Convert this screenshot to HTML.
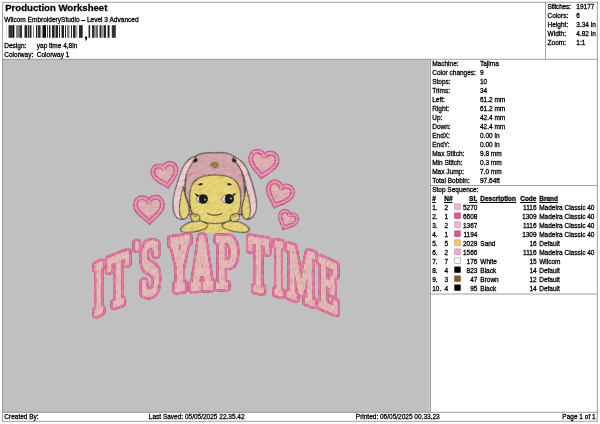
<!DOCTYPE html>
<html><head><meta charset="utf-8"><title>Production Worksheet</title>
<style>
html,body{margin:0;padding:0;background:#fff;}
body{width:600px;height:424px;position:relative;overflow:hidden;font-family:"Liberation Sans",sans-serif;color:#000;}
.t{position:absolute;white-space:nowrap;-webkit-text-stroke:0.28px #000;}
.t{text-decoration-skip-ink:none;}
svg{position:absolute;left:0;top:0;}
#txt{position:absolute;left:0;top:0;width:600px;height:424px;will-change:transform;}
</style></head><body>
<svg width="600" height="424" viewBox="0 0 600 424">
<rect x="2.6" y="59.4" width="427.2" height="352.9" fill="#c0c0c0"/>
<line x1="2.2" y1="2.3" x2="597.7" y2="2.3" stroke="#757575" stroke-width="0.7"/>
<line x1="2.2" y1="421.3" x2="597.7" y2="421.3" stroke="#757575" stroke-width="0.7"/>
<line x1="2.6" y1="2.3" x2="2.6" y2="421.3" stroke="#757575" stroke-width="0.7"/>
<line x1="597.3" y1="2.3" x2="597.3" y2="421.3" stroke="#757575" stroke-width="0.7"/>
<line x1="2.6" y1="59.3" x2="597.3" y2="59.3" stroke="#757575" stroke-width="0.7"/>
<line x1="2.6" y1="412.3" x2="597.3" y2="412.3" stroke="#757575" stroke-width="0.7"/>
<line x1="545.5" y1="2.3" x2="545.5" y2="59.3" stroke="#757575" stroke-width="0.7"/>
<line x1="430.5" y1="59.3" x2="430.5" y2="412.3" stroke="#757575" stroke-width="0.7"/>
<line x1="430.5" y1="185.5" x2="597.3" y2="185.5" stroke="#757575" stroke-width="0.7"/>
<line x1="430.5" y1="294.0" x2="597.3" y2="294.0" stroke="#757575" stroke-width="0.7"/>
</svg>
<div id="txt">
<div class="t" style="top:2.22px;font-size:9.6px;line-height:12px;left:5.2px;font-weight:bold;">Production Worksheet</div>
<div class="t" style="top:15.43px;font-size:6.55px;line-height:9px;left:4.3px;">Wilcom EmbroideryStudio – Level 3 Advanced</div>
<div class="t" style="top:41.75px;font-size:6.5px;line-height:8px;left:4.3px;">Design:</div>
<div class="t" style="top:41.75px;font-size:6.5px;line-height:8px;left:36.8px;">yap time 4,8in</div>
<div class="t" style="top:50.75px;font-size:6.5px;line-height:8px;left:4.3px;">Colorway:</div>
<div class="t" style="top:50.75px;font-size:6.5px;line-height:8px;left:36.8px;">Colorway 1</div>
<svg width="600" height="424" viewBox="0 0 600 424">
<rect x="6.2" y="25.2" width="0.8" height="12.6" fill="#000" fill-opacity="0.15"/>
<rect x="8.5" y="25.2" width="4" height="12.6" fill="#000" fill-opacity="0.8"/>
<rect x="12.5" y="25.2" width="1.8" height="12.6" fill="#000" fill-opacity="1"/>
<rect x="16" y="25.2" width="3.5" height="12.6" fill="#000" fill-opacity="0.5"/>
<rect x="19.5" y="25.2" width="2.5" height="12.6" fill="#000" fill-opacity="0.8"/>
<rect x="24.5" y="25.2" width="2.5" height="12.6" fill="#000" fill-opacity="0.85"/>
<rect x="27" y="25.2" width="1" height="12.6" fill="#000" fill-opacity="0.25"/>
<rect x="28" y="25.2" width="1.2" height="12.6" fill="#000" fill-opacity="0.85"/>
<rect x="29.7" y="25.2" width="1.8" height="12.6" fill="#000" fill-opacity="0.85"/>
<rect x="33" y="25.2" width="0.8" height="12.6" fill="#000" fill-opacity="0.6"/>
<rect x="36" y="25.2" width="1.1" height="12.6" fill="#000" fill-opacity="0.9"/>
<rect x="37" y="25.2" width="1" height="12.6" fill="#000" fill-opacity="0.2"/>
<rect x="38" y="25.2" width="2.5" height="12.6" fill="#000" fill-opacity="0.8"/>
<rect x="40.5" y="25.2" width="1.5" height="12.6" fill="#000" fill-opacity="0.15"/>
<rect x="42.5" y="25.2" width="3.5" height="12.6" fill="#000" fill-opacity="0.95"/>
<rect x="47" y="25.2" width="0.9" height="12.6" fill="#000" fill-opacity="0.8"/>
<rect x="49" y="25.2" width="1.5" height="12.6" fill="#000" fill-opacity="0.85"/>
<rect x="52" y="25.2" width="2.5" height="12.6" fill="#000" fill-opacity="0.85"/>
<rect x="54.5" y="25.2" width="1.5" height="12.6" fill="#000" fill-opacity="0.45"/>
<rect x="56" y="25.2" width="2" height="12.6" fill="#000" fill-opacity="0.85"/>
<rect x="59" y="25.2" width="1" height="12.6" fill="#000" fill-opacity="0.85"/>
<rect x="61.5" y="25.2" width="2.5" height="12.6" fill="#000" fill-opacity="0.85"/>
<rect x="65" y="25.2" width="1" height="12.6" fill="#000" fill-opacity="0.85"/>
<rect x="67" y="25.2" width="2.5" height="12.6" fill="#000" fill-opacity="0.5"/>
<rect x="71" y="25.2" width="1" height="12.6" fill="#000" fill-opacity="0.85"/>
<rect x="73" y="25.2" width="2.5" height="12.6" fill="#000" fill-opacity="0.85"/>
<rect x="75.5" y="25.2" width="2" height="12.6" fill="#000" fill-opacity="0.35"/>
<rect x="79" y="25.2" width="3.7" height="12.6" fill="#000" fill-opacity="0.85"/>
<rect x="88.6" y="25.2" width="1.5" height="12.6" fill="#000" fill-opacity="0.9"/>
<rect x="92.1" y="25.2" width="2.2" height="12.6" fill="#000" fill-opacity="0.85"/>
<rect x="94.3" y="25.2" width="1" height="12.6" fill="#000" fill-opacity="0.4"/>
<rect x="95.5" y="25.2" width="2.5" height="12.6" fill="#000" fill-opacity="0.6"/>
<rect x="99.5" y="25.2" width="1.8" height="12.6" fill="#000" fill-opacity="0.85"/>
<rect x="101.3" y="25.2" width="2.3" height="12.6" fill="#000" fill-opacity="0.4"/>
<rect x="103.8" y="25.2" width="2.2" height="12.6" fill="#000" fill-opacity="0.85"/>
<rect x="107.6" y="25.2" width="1.9" height="12.6" fill="#000" fill-opacity="0.9"/>
<rect x="111.8" y="25.2" width="4" height="12.6" fill="#000" fill-opacity="0.8"/>
<path d="M85 36.6h2.1v2.2q0 1.3-1.6 1.9l-.4-.7q.8-.4.8-1.2H85z" fill="#000"/>
</svg>
<div class="t" style="top:2.75px;font-size:6.5px;line-height:8px;left:547.6px;letter-spacing:-0.22px;">Stitches:</div>
<div class="t" style="top:2.75px;font-size:6.5px;line-height:8px;left:576.3px;">19177</div>
<div class="t" style="top:11.75px;font-size:6.5px;line-height:8px;left:547.6px;">Colors:</div>
<div class="t" style="top:11.75px;font-size:6.5px;line-height:8px;left:576.3px;">6</div>
<div class="t" style="top:20.75px;font-size:6.5px;line-height:8px;left:547.6px;">Height:</div>
<div class="t" style="top:20.75px;font-size:6.5px;line-height:8px;left:576.3px;">3.34 in</div>
<div class="t" style="top:29.75px;font-size:6.5px;line-height:8px;left:547.6px;">Width:</div>
<div class="t" style="top:29.75px;font-size:6.5px;line-height:8px;left:576.3px;">4.82 in</div>
<div class="t" style="top:38.75px;font-size:6.5px;line-height:8px;left:547.6px;">Zoom:</div>
<div class="t" style="top:38.75px;font-size:6.5px;line-height:8px;left:576.3px;">1:1</div>
<div class="t" style="top:59.75px;font-size:6.5px;line-height:8px;left:432.2px;">Machine:</div>
<div class="t" style="top:59.75px;font-size:6.5px;line-height:8px;left:480px;">Tajima</div>
<div class="t" style="top:68.75px;font-size:6.5px;line-height:8px;left:432.2px;">Color changes:</div>
<div class="t" style="top:68.75px;font-size:6.5px;line-height:8px;left:480px;">9</div>
<div class="t" style="top:77.75px;font-size:6.5px;line-height:8px;left:432.2px;">Stops:</div>
<div class="t" style="top:77.75px;font-size:6.5px;line-height:8px;left:480px;">10</div>
<div class="t" style="top:86.75px;font-size:6.5px;line-height:8px;left:432.2px;">Trims:</div>
<div class="t" style="top:86.75px;font-size:6.5px;line-height:8px;left:480px;">34</div>
<div class="t" style="top:95.75px;font-size:6.5px;line-height:8px;left:432.2px;">Left:</div>
<div class="t" style="top:95.75px;font-size:6.5px;line-height:8px;left:480px;">61.2 mm</div>
<div class="t" style="top:104.75px;font-size:6.5px;line-height:8px;left:432.2px;">Right:</div>
<div class="t" style="top:104.75px;font-size:6.5px;line-height:8px;left:480px;">61.2 mm</div>
<div class="t" style="top:113.75px;font-size:6.5px;line-height:8px;left:432.2px;">Up:</div>
<div class="t" style="top:113.75px;font-size:6.5px;line-height:8px;left:480px;">42.4 mm</div>
<div class="t" style="top:122.75px;font-size:6.5px;line-height:8px;left:432.2px;">Down:</div>
<div class="t" style="top:122.75px;font-size:6.5px;line-height:8px;left:480px;">42.4 mm</div>
<div class="t" style="top:131.75px;font-size:6.5px;line-height:8px;left:432.2px;">EndX:</div>
<div class="t" style="top:131.75px;font-size:6.5px;line-height:8px;left:480px;">0.00 in</div>
<div class="t" style="top:140.75px;font-size:6.5px;line-height:8px;left:432.2px;">EndY:</div>
<div class="t" style="top:140.75px;font-size:6.5px;line-height:8px;left:480px;">0.00 in</div>
<div class="t" style="top:149.75px;font-size:6.5px;line-height:8px;left:432.2px;">Max Stitch:</div>
<div class="t" style="top:149.75px;font-size:6.5px;line-height:8px;left:480px;">9.8 mm</div>
<div class="t" style="top:158.75px;font-size:6.5px;line-height:8px;left:432.2px;">Min Stitch:</div>
<div class="t" style="top:158.75px;font-size:6.5px;line-height:8px;left:480px;">0.3 mm</div>
<div class="t" style="top:167.75px;font-size:6.5px;line-height:8px;left:432.2px;">Max Jump:</div>
<div class="t" style="top:167.75px;font-size:6.5px;line-height:8px;left:480px;">7.0 mm</div>
<div class="t" style="top:176.75px;font-size:6.5px;line-height:8px;left:432.2px;">Total Bobbin:</div>
<div class="t" style="top:176.75px;font-size:6.5px;line-height:8px;left:480px;">97.64ft</div>
<div class="t" style="top:185.75px;font-size:6.5px;line-height:8px;left:432.2px;">Stop Sequence:</div>
<div class="t" style="top:194.75px;font-size:6.5px;line-height:8px;left:432.2px;font-weight:bold;text-decoration:underline;">#</div>
<div class="t" style="top:194.75px;font-size:6.5px;line-height:8px;left:444.2px;font-weight:bold;text-decoration:underline;">N#</div>
<div class="t" style="top:194.75px;font-size:6.5px;line-height:8px;right:122.60000000000002px;font-weight:bold;text-decoration:underline;">St.</div>
<div class="t" style="top:194.75px;font-size:6.5px;line-height:8px;left:480.3px;font-weight:bold;text-decoration:underline;">Description</div>
<div class="t" style="top:194.75px;font-size:6.5px;line-height:8px;left:520.2px;font-weight:bold;text-decoration:underline;">Code</div>
<div class="t" style="top:194.75px;font-size:6.5px;line-height:8px;left:539.2px;font-weight:bold;text-decoration:underline;">Brand</div>
<div class="t" style="top:203.75px;font-size:6.5px;line-height:8px;left:432.2px;">1.</div>
<div class="t" style="top:203.75px;font-size:6.5px;line-height:8px;left:444.4px;">2</div>
<svg width="600" height="424" viewBox="0 0 600 424"><rect x="454.7" y="203.9" width="5.6" height="5.6" fill="#f2b3cc" stroke="#c1869f" stroke-width="0.6"/></svg>
<div class="t" style="top:203.75px;font-size:6.5px;line-height:8px;right:122.60000000000002px;">5270</div>
<div class="t" style="top:203.75px;font-size:6.5px;line-height:8px;right:63.39999999999998px;">1116</div>
<div class="t" style="top:203.75px;font-size:6.5px;line-height:8px;left:539.2px;">Madeira Classic 40</div>
<div class="t" style="top:212.75px;font-size:6.5px;line-height:8px;left:432.2px;">2.</div>
<div class="t" style="top:212.75px;font-size:6.5px;line-height:8px;left:444.4px;">1</div>
<svg width="600" height="424" viewBox="0 0 600 424"><rect x="454.7" y="212.9" width="5.6" height="5.6" fill="#e0569b" stroke="#b34078" stroke-width="0.6"/></svg>
<div class="t" style="top:212.75px;font-size:6.5px;line-height:8px;right:122.60000000000002px;">6608</div>
<div class="t" style="top:212.75px;font-size:6.5px;line-height:8px;right:63.39999999999998px;">1309</div>
<div class="t" style="top:212.75px;font-size:6.5px;line-height:8px;left:539.2px;">Madeira Classic 40</div>
<div class="t" style="top:221.75px;font-size:6.5px;line-height:8px;left:432.2px;">3.</div>
<div class="t" style="top:221.75px;font-size:6.5px;line-height:8px;left:444.4px;">2</div>
<svg width="600" height="424" viewBox="0 0 600 424"><rect x="454.7" y="221.9" width="5.6" height="5.6" fill="#f2b7cd" stroke="#c1899f" stroke-width="0.6"/></svg>
<div class="t" style="top:221.75px;font-size:6.5px;line-height:8px;right:122.60000000000002px;">1367</div>
<div class="t" style="top:221.75px;font-size:6.5px;line-height:8px;right:63.39999999999998px;">1116</div>
<div class="t" style="top:221.75px;font-size:6.5px;line-height:8px;left:539.2px;">Madeira Classic 40</div>
<div class="t" style="top:230.75px;font-size:6.5px;line-height:8px;left:432.2px;">4.</div>
<div class="t" style="top:230.75px;font-size:6.5px;line-height:8px;left:444.4px;">1</div>
<svg width="600" height="424" viewBox="0 0 600 424"><rect x="454.7" y="230.9" width="5.6" height="5.6" fill="#e0519a" stroke="#b33c78" stroke-width="0.6"/></svg>
<div class="t" style="top:230.75px;font-size:6.5px;line-height:8px;right:122.60000000000002px;">1194</div>
<div class="t" style="top:230.75px;font-size:6.5px;line-height:8px;right:63.39999999999998px;">1309</div>
<div class="t" style="top:230.75px;font-size:6.5px;line-height:8px;left:539.2px;">Madeira Classic 40</div>
<div class="t" style="top:239.75px;font-size:6.5px;line-height:8px;left:432.2px;">5.</div>
<div class="t" style="top:239.75px;font-size:6.5px;line-height:8px;left:444.4px;">5</div>
<svg width="600" height="424" viewBox="0 0 600 424"><rect x="454.7" y="239.9" width="5.6" height="5.6" fill="#f8c56e" stroke="#c69355" stroke-width="0.6"/></svg>
<div class="t" style="top:239.75px;font-size:6.5px;line-height:8px;right:122.60000000000002px;">2029</div>
<div class="t" style="top:239.75px;font-size:6.5px;line-height:8px;left:480.3px;">Sand</div>
<div class="t" style="top:239.75px;font-size:6.5px;line-height:8px;right:63.39999999999998px;">16</div>
<div class="t" style="top:239.75px;font-size:6.5px;line-height:8px;left:539.2px;">Default</div>
<div class="t" style="top:248.75px;font-size:6.5px;line-height:8px;left:432.2px;">6.</div>
<div class="t" style="top:248.75px;font-size:6.5px;line-height:8px;left:444.4px;">2</div>
<svg width="600" height="424" viewBox="0 0 600 424"><rect x="454.7" y="248.9" width="5.6" height="5.6" fill="#f3a9cb" stroke="#c27e9e" stroke-width="0.6"/></svg>
<div class="t" style="top:248.75px;font-size:6.5px;line-height:8px;right:122.60000000000002px;">1566</div>
<div class="t" style="top:248.75px;font-size:6.5px;line-height:8px;right:63.39999999999998px;">1116</div>
<div class="t" style="top:248.75px;font-size:6.5px;line-height:8px;left:539.2px;">Madeira Classic 40</div>
<div class="t" style="top:257.75px;font-size:6.5px;line-height:8px;left:432.2px;">7.</div>
<div class="t" style="top:257.75px;font-size:6.5px;line-height:8px;left:444.4px;">7</div>
<svg width="600" height="424" viewBox="0 0 600 424"><rect x="454.7" y="257.9" width="5.6" height="5.6" fill="#ffffff" stroke="#8a8a8a" stroke-width="0.6"/></svg>
<div class="t" style="top:257.75px;font-size:6.5px;line-height:8px;right:122.60000000000002px;">176</div>
<div class="t" style="top:257.75px;font-size:6.5px;line-height:8px;left:480.3px;">White</div>
<div class="t" style="top:257.75px;font-size:6.5px;line-height:8px;right:63.39999999999998px;">15</div>
<div class="t" style="top:257.75px;font-size:6.5px;line-height:8px;left:539.2px;">Wilcom</div>
<div class="t" style="top:266.75px;font-size:6.5px;line-height:8px;left:432.2px;">8.</div>
<div class="t" style="top:266.75px;font-size:6.5px;line-height:8px;left:444.4px;">4</div>
<svg width="600" height="424" viewBox="0 0 600 424"><rect x="454.7" y="266.9" width="5.6" height="5.6" fill="#000000" stroke="#000000" stroke-width="0.6"/></svg>
<div class="t" style="top:266.75px;font-size:6.5px;line-height:8px;right:122.60000000000002px;">823</div>
<div class="t" style="top:266.75px;font-size:6.5px;line-height:8px;left:480.3px;">Black</div>
<div class="t" style="top:266.75px;font-size:6.5px;line-height:8px;right:63.39999999999998px;">14</div>
<div class="t" style="top:266.75px;font-size:6.5px;line-height:8px;left:539.2px;">Default</div>
<div class="t" style="top:275.75px;font-size:6.5px;line-height:8px;left:432.2px;">9.</div>
<div class="t" style="top:275.75px;font-size:6.5px;line-height:8px;left:444.4px;">3</div>
<svg width="600" height="424" viewBox="0 0 600 424"><rect x="454.7" y="275.9" width="5.6" height="5.6" fill="#8a5a2a" stroke="#6e4320" stroke-width="0.6"/></svg>
<div class="t" style="top:275.75px;font-size:6.5px;line-height:8px;right:122.60000000000002px;">47</div>
<div class="t" style="top:275.75px;font-size:6.5px;line-height:8px;left:480.3px;">Brown</div>
<div class="t" style="top:275.75px;font-size:6.5px;line-height:8px;right:63.39999999999998px;">12</div>
<div class="t" style="top:275.75px;font-size:6.5px;line-height:8px;left:539.2px;">Default</div>
<div class="t" style="top:284.75px;font-size:6.5px;line-height:8px;left:432.2px;">10.</div>
<div class="t" style="top:284.75px;font-size:6.5px;line-height:8px;left:444.4px;">4</div>
<svg width="600" height="424" viewBox="0 0 600 424"><rect x="454.7" y="284.9" width="5.6" height="5.6" fill="#000000" stroke="#000000" stroke-width="0.6"/></svg>
<div class="t" style="top:284.75px;font-size:6.5px;line-height:8px;right:122.60000000000002px;">95</div>
<div class="t" style="top:284.75px;font-size:6.5px;line-height:8px;left:480.3px;">Black</div>
<div class="t" style="top:284.75px;font-size:6.5px;line-height:8px;right:63.39999999999998px;">14</div>
<div class="t" style="top:284.75px;font-size:6.5px;line-height:8px;left:539.2px;">Default</div>
<div class="t" style="top:413.05px;font-size:6.5px;line-height:8px;left:4.3px;">Created By:</div>
<div class="t" style="top:413.05px;font-size:6.5px;line-height:8px;left:148.8px;">Last Saved: 05/05/2025 22.35.42</div>
<div class="t" style="top:413.05px;font-size:6.5px;line-height:8px;left:355.8px;">Printed: 06/05/2025 00.33.23</div>
<div class="t" style="top:413.05px;font-size:6.5px;line-height:8px;right:4.399999999999977px;">Page 1 of 1</div>
</div>
<svg width="600" height="424" viewBox="0 0 600 424">
<defs><filter id="tex" filterUnits="userSpaceOnUse" x="85" y="140" width="262" height="190" color-interpolation-filters="sRGB"><feTurbulence type="fractalNoise" baseFrequency="0.15 0.7" numOctaves="2" seed="7" result="n"/><feColorMatrix in="n" type="matrix" values="0 0 0 0 1  0 0 0 0 0.97  0 0 0 0 0.95  0.55 0 0 0 -0.21" result="w"/><feComposite in="w" in2="SourceGraphic" operator="in" result="wi"/><feColorMatrix in="n" type="matrix" values="0 0 0 0 0.35  0 0 0 0 0.1  0 0 0 0 0.15  0 -0.55 0 0 0.26" result="d"/><feComposite in="d" in2="SourceGraphic" operator="in" result="di"/><feMerge><feMergeNode in="SourceGraphic"/><feMergeNode in="wi"/><feMergeNode in="di"/></feMerge></filter><filter id="tex2" filterUnits="userSpaceOnUse" x="140" y="120" width="150" height="150" color-interpolation-filters="sRGB"><feTurbulence type="fractalNoise" baseFrequency="0.12 0.6" numOctaves="2" seed="5" result="n"/><feColorMatrix in="n" type="matrix" values="0 0 0 0 1  0 0 0 0 0.97  0 0 0 0 0.95  0.55 0 0 0 -0.21" result="w"/><feComposite in="w" in2="SourceGraphic" operator="in" result="wi"/><feColorMatrix in="n" type="matrix" values="0 0 0 0 0.35  0 0 0 0 0.1  0 0 0 0 0.15  0 -0.55 0 0 0.26" result="d"/><feComposite in="d" in2="SourceGraphic" operator="in" result="di"/><feMerge><feMergeNode in="SourceGraphic"/><feMergeNode in="wi"/><feMergeNode in="di"/></feMerge></filter><filter id="texv" filterUnits="userSpaceOnUse" x="85" y="140" width="262" height="190" color-interpolation-filters="sRGB"><feTurbulence type="fractalNoise" baseFrequency="0.55 0.2" numOctaves="2" seed="11" result="n"/><feColorMatrix in="n" type="matrix" values="0 0 0 0 1  0 0 0 0 0.97  0 0 0 0 0.95  0.5 0 0 0 -0.2" result="w"/><feComposite in="w" in2="SourceGraphic" operator="in" result="wi"/><feColorMatrix in="n" type="matrix" values="0 0 0 0 0.35  0 0 0 0 0.1  0 0 0 0 0.15  0 -0.55 0 0 0.26" result="d"/><feComposite in="d" in2="SourceGraphic" operator="in" result="di"/><feMerge><feMergeNode in="SourceGraphic"/><feMergeNode in="wi"/><feMergeNode in="di"/></feMerge></filter></defs>
<g filter="url(#tex)">
<path d="M 167.79 185.55 C 164.17 182.99 154.43 180.15 152.95 173.72 C 151.99 169.58 154.27 166.87 157.26 166.18 C 159.79 165.60 162.41 166.44 164.02 169.22 C 164.25 166.02 166.23 164.11 168.76 163.52 C 171.75 162.83 174.99 164.27 175.94 168.41 C 177.43 174.85 169.92 181.66 167.79 185.55 Z" fill="#dcadad" stroke="#b3627f" stroke-width="5.00" stroke-linejoin="miter" stroke-miterlimit="1.7"/>
<path d="M 167.79 185.55 C 164.17 182.99 154.43 180.15 152.95 173.72 C 151.99 169.58 154.27 166.87 157.26 166.18 C 159.79 165.60 162.41 166.44 164.02 169.22 C 164.25 166.02 166.23 164.11 168.76 163.52 C 171.75 162.83 174.99 164.27 175.94 168.41 C 177.43 174.85 169.92 181.66 167.79 185.55 Z" fill="none" stroke="#cf618e" stroke-width="3.30" stroke-linejoin="miter" stroke-miterlimit="1.7"/>
<path d="M 167.79 185.55 C 164.17 182.99 154.43 180.15 152.95 173.72 C 151.99 169.58 154.27 166.87 157.26 166.18 C 159.79 165.60 162.41 166.44 164.02 169.22 C 164.25 166.02 166.23 164.11 168.76 163.52 C 171.75 162.83 174.99 164.27 175.94 168.41 C 177.43 174.85 169.92 181.66 167.79 185.55 Z" fill="none" stroke="#e87faa" stroke-width="2.38" stroke-linejoin="miter" stroke-miterlimit="1.7"/>
<path d="M 167.79 185.55 C 164.17 182.99 154.43 180.15 152.95 173.72 C 151.99 169.58 154.27 166.87 157.26 166.18 C 159.79 165.60 162.41 166.44 164.02 169.22 C 164.25 166.02 166.23 164.11 168.76 163.52 C 171.75 162.83 174.99 164.27 175.94 168.41 C 177.43 174.85 169.92 181.66 167.79 185.55 Z" fill="none" stroke="#f29abf" stroke-width="0.99" stroke-linejoin="round"/>
<path d="M 149.52 221.84 C 146.02 218.18 135.70 212.87 135.44 205.31 C 135.27 200.46 138.42 197.92 141.93 197.79 C 144.90 197.69 147.65 199.21 148.86 202.68 C 149.81 199.14 152.45 197.43 155.42 197.32 C 158.93 197.20 162.25 199.51 162.42 204.37 C 162.69 211.93 152.77 217.95 149.52 221.84 Z" fill="#dcadad" stroke="#b3627f" stroke-width="5.00" stroke-linejoin="miter" stroke-miterlimit="1.7"/>
<path d="M 149.52 221.84 C 146.02 218.18 135.70 212.87 135.44 205.31 C 135.27 200.46 138.42 197.92 141.93 197.79 C 144.90 197.69 147.65 199.21 148.86 202.68 C 149.81 199.14 152.45 197.43 155.42 197.32 C 158.93 197.20 162.25 199.51 162.42 204.37 C 162.69 211.93 152.77 217.95 149.52 221.84 Z" fill="none" stroke="#cf618e" stroke-width="3.30" stroke-linejoin="miter" stroke-miterlimit="1.7"/>
<path d="M 149.52 221.84 C 146.02 218.18 135.70 212.87 135.44 205.31 C 135.27 200.46 138.42 197.92 141.93 197.79 C 144.90 197.69 147.65 199.21 148.86 202.68 C 149.81 199.14 152.45 197.43 155.42 197.32 C 158.93 197.20 162.25 199.51 162.42 204.37 C 162.69 211.93 152.77 217.95 149.52 221.84 Z" fill="none" stroke="#e87faa" stroke-width="2.38" stroke-linejoin="miter" stroke-miterlimit="1.7"/>
<path d="M 149.52 221.84 C 146.02 218.18 135.70 212.87 135.44 205.31 C 135.27 200.46 138.42 197.92 141.93 197.79 C 144.90 197.69 147.65 199.21 148.86 202.68 C 149.81 199.14 152.45 197.43 155.42 197.32 C 158.93 197.20 162.25 199.51 162.42 204.37 C 162.69 211.93 152.77 217.95 149.52 221.84 Z" fill="none" stroke="#f29abf" stroke-width="0.99" stroke-linejoin="round"/>
<path d="M 261.53 176.05 C 258.76 171.90 249.66 164.98 250.70 157.61 C 251.36 152.87 254.86 150.94 258.28 151.42 C 261.18 151.83 263.59 153.78 264.16 157.35 C 265.70 154.08 268.55 152.86 271.45 153.27 C 274.88 153.75 277.70 156.57 277.04 161.31 C 276.00 168.69 265.35 172.83 261.53 176.05 Z" fill="#dcadad" stroke="#b3627f" stroke-width="5.00" stroke-linejoin="miter" stroke-miterlimit="1.7"/>
<path d="M 261.53 176.05 C 258.76 171.90 249.66 164.98 250.70 157.61 C 251.36 152.87 254.86 150.94 258.28 151.42 C 261.18 151.83 263.59 153.78 264.16 157.35 C 265.70 154.08 268.55 152.86 271.45 153.27 C 274.88 153.75 277.70 156.57 277.04 161.31 C 276.00 168.69 265.35 172.83 261.53 176.05 Z" fill="none" stroke="#cf618e" stroke-width="3.30" stroke-linejoin="miter" stroke-miterlimit="1.7"/>
<path d="M 261.53 176.05 C 258.76 171.90 249.66 164.98 250.70 157.61 C 251.36 152.87 254.86 150.94 258.28 151.42 C 261.18 151.83 263.59 153.78 264.16 157.35 C 265.70 154.08 268.55 152.86 271.45 153.27 C 274.88 153.75 277.70 156.57 277.04 161.31 C 276.00 168.69 265.35 172.83 261.53 176.05 Z" fill="none" stroke="#e87faa" stroke-width="2.38" stroke-linejoin="miter" stroke-miterlimit="1.7"/>
<path d="M 261.53 176.05 C 258.76 171.90 249.66 164.98 250.70 157.61 C 251.36 152.87 254.86 150.94 258.28 151.42 C 261.18 151.83 263.59 153.78 264.16 157.35 C 265.70 154.08 268.55 152.86 271.45 153.27 C 274.88 153.75 277.70 156.57 277.04 161.31 C 276.00 168.69 265.35 172.83 261.53 176.05 Z" fill="none" stroke="#f29abf" stroke-width="0.99" stroke-linejoin="round"/>
<path d="M 275.05 205.47 C 273.31 201.11 266.30 192.97 268.69 186.40 C 270.23 182.17 273.82 181.08 276.87 182.19 C 279.46 183.13 281.30 185.40 281.12 188.79 C 283.17 186.08 286.04 185.53 288.62 186.47 C 291.67 187.58 293.72 190.72 292.19 194.95 C 289.79 201.52 279.19 203.25 275.05 205.47 Z" fill="#dcadad" stroke="#b3627f" stroke-width="5.00" stroke-linejoin="miter" stroke-miterlimit="1.7"/>
<path d="M 275.05 205.47 C 273.31 201.11 266.30 192.97 268.69 186.40 C 270.23 182.17 273.82 181.08 276.87 182.19 C 279.46 183.13 281.30 185.40 281.12 188.79 C 283.17 186.08 286.04 185.53 288.62 186.47 C 291.67 187.58 293.72 190.72 292.19 194.95 C 289.79 201.52 279.19 203.25 275.05 205.47 Z" fill="none" stroke="#cf618e" stroke-width="3.30" stroke-linejoin="miter" stroke-miterlimit="1.7"/>
<path d="M 275.05 205.47 C 273.31 201.11 266.30 192.97 268.69 186.40 C 270.23 182.17 273.82 181.08 276.87 182.19 C 279.46 183.13 281.30 185.40 281.12 188.79 C 283.17 186.08 286.04 185.53 288.62 186.47 C 291.67 187.58 293.72 190.72 292.19 194.95 C 289.79 201.52 279.19 203.25 275.05 205.47 Z" fill="none" stroke="#e87faa" stroke-width="2.38" stroke-linejoin="miter" stroke-miterlimit="1.7"/>
<path d="M 275.05 205.47 C 273.31 201.11 266.30 192.97 268.69 186.40 C 270.23 182.17 273.82 181.08 276.87 182.19 C 279.46 183.13 281.30 185.40 281.12 188.79 C 283.17 186.08 286.04 185.53 288.62 186.47 C 291.67 187.58 293.72 190.72 292.19 194.95 C 289.79 201.52 279.19 203.25 275.05 205.47 Z" fill="none" stroke="#f29abf" stroke-width="0.99" stroke-linejoin="round"/>
<path d="M 284.08 227.64 C 283.07 224.49 278.54 218.43 280.55 213.93 C 281.84 211.03 284.41 210.44 286.50 211.38 C 288.27 212.16 289.45 213.84 289.16 216.22 C 290.73 214.42 292.77 214.17 294.54 214.95 C 296.63 215.88 297.92 218.19 296.63 221.09 C 294.62 225.59 287.09 226.28 284.08 227.64 Z" fill="#dcadad" stroke="#b3627f" stroke-width="4.40" stroke-linejoin="miter" stroke-miterlimit="1.7"/>
<path d="M 284.08 227.64 C 283.07 224.49 278.54 218.43 280.55 213.93 C 281.84 211.03 284.41 210.44 286.50 211.38 C 288.27 212.16 289.45 213.84 289.16 216.22 C 290.73 214.42 292.77 214.17 294.54 214.95 C 296.63 215.88 297.92 218.19 296.63 221.09 C 294.62 225.59 287.09 226.28 284.08 227.64 Z" fill="none" stroke="#cf618e" stroke-width="2.70" stroke-linejoin="miter" stroke-miterlimit="1.7"/>
<path d="M 284.08 227.64 C 283.07 224.49 278.54 218.43 280.55 213.93 C 281.84 211.03 284.41 210.44 286.50 211.38 C 288.27 212.16 289.45 213.84 289.16 216.22 C 290.73 214.42 292.77 214.17 294.54 214.95 C 296.63 215.88 297.92 218.19 296.63 221.09 C 294.62 225.59 287.09 226.28 284.08 227.64 Z" fill="none" stroke="#e87faa" stroke-width="1.94" stroke-linejoin="miter" stroke-miterlimit="1.7"/>
<path d="M 284.08 227.64 C 283.07 224.49 278.54 218.43 280.55 213.93 C 281.84 211.03 284.41 210.44 286.50 211.38 C 288.27 212.16 289.45 213.84 289.16 216.22 C 290.73 214.42 292.77 214.17 294.54 214.95 C 296.63 215.88 297.92 218.19 296.63 221.09 C 294.62 225.59 287.09 226.28 284.08 227.64 Z" fill="none" stroke="#f29abf" stroke-width="0.81" stroke-linejoin="round"/>
</g>
<g transform="rotate(-28 215 195)" filter="url(#tex2)"><g transform="rotate(28 215 195)">
<path d="M186 214 C184.5 200 184 180 189 163.5 C193 156.5 199 153.2 207 152.9 L223 152.7 C230 153 236 156 240 163.5 C245 180 245.5 200 244 214 Z" fill="#d0a1a6" stroke="#1a1a1a" stroke-width="0.8" stroke-linejoin="round" stroke-linecap="round"/>
<path d="M193 157 C187 160 183.5 165 180.5 173 C177 183 174 193 173.1 200 C172.6 206 173.3 212 175.4 215.8 C177 218.5 179.5 219.6 182.5 219.3 C186 219 188.8 216 189.3 211 C189.6 207 188 202 186.1 198 C184.8 194 184.6 188 185 182 C185.5 174 190 165 196 158 Z" fill="#efc8cc" stroke="#1a1a1a" stroke-width="0.8" stroke-linejoin="round" stroke-linecap="round"/>
<path d="M183.3 186.8 C181.5 192 180 200 179.4 207 C179 212 180 217 182.7 219.1 C186 219 188.8 216 189.2 211 C189.5 206 187.5 201.5 186 198 C184.8 194 184 190.5 183.3 186.8 Z" fill="#e4d26e" stroke="#1a1a1a" stroke-width="0.8" stroke-linejoin="round" stroke-linecap="round"/>
<path d="M234 157 C240 159 244.5 163.5 247.5 170.5 C251 179 254 189 255.5 196.5 C257 203 257 209.5 254.6 214 C252.5 217.8 250 219.5 247.2 219.4 C243.8 219 241.8 216 241.7 211.5 C241.6 207 243.2 202 244.4 198 C245.6 194 245.9 190 245.7 186 C245 176 240 166 233 159 Z" fill="#efc8cc" stroke="#1a1a1a" stroke-width="0.8" stroke-linejoin="round" stroke-linecap="round"/>
<path d="M245.9 187.3 C245.5 191 244.9 195 244.2 198.7 C243 202.5 241.7 207 241.8 211.5 C241.9 216 243.8 219 247.1 219.2 C249.5 218.5 250.5 214 250.4 209.5 C250 202 248 194 245.9 187.3 Z" fill="#e4d26e" stroke="#1a1a1a" stroke-width="0.8" stroke-linejoin="round" stroke-linecap="round"/>
<ellipse cx="214.6" cy="164.8" rx="4.4" ry="3.1" fill="#96703a"/>
<ellipse cx="195.4" cy="160.6" rx="2.5" ry="1.9" fill="#1a1a1a" transform="rotate(-30 195.4 160.6)"/>
<ellipse cx="234" cy="160.4" rx="2.5" ry="1.9" fill="#1a1a1a" transform="rotate(30 234 160.6)"/>
<path d="M203 222 L227 222 L229.5 232.8 L200.5 232.8 Z" fill="#e4d26e"/>
<path d="M180.7 228.8 C183 225.5 186.5 223.6 190 222.2 L199 220.5 C202 221.5 205.5 223 208 224.2 C208.3 226 207 227.8 204.5 229 C199 231.5 190 232.7 184.5 232.3 C181.5 231.9 180 230.5 180.7 228.8 Z" fill="#e4d26e" stroke="#1a1a1a" stroke-width="0.8" stroke-linejoin="round" stroke-linecap="round"/>
<path d="M249.3 228.8 C247 225.5 243.5 223.6 240 222.2 L231 220.5 C228 221.5 224.5 223 222 224.2 C221.7 226 223 227.8 225.5 229 C231 231.5 240 232.7 245.5 232.3 C248.5 231.9 250 230.5 249.3 228.8 Z" fill="#e4d26e" stroke="#1a1a1a" stroke-width="0.8" stroke-linejoin="round" stroke-linecap="round"/>
<path d="M215 175 C222 175 228.5 176 233 179 C237.5 182 240 187 240.6 193 C241.2 199 240.8 205 239.5 210 C237 218.5 228 223.5 215 223.5 C202 223.5 193.5 218.5 191 210 C189.7 205 189.3 199 189.9 193 C190.5 187 193 182 197.5 179 C202 176 208 175 215 175 Z" fill="#e4d26e" stroke="#1a1a1a" stroke-width="0.8" stroke-linejoin="round" stroke-linecap="round"/>
<path d="M190.8 214.5 C189.8 217.5 191.3 221 195 221.8 C198.5 222.3 200.6 219.5 199.6 216.5 C198 213.5 192.5 212.8 190.8 214.5 Z" fill="#e4d26e" stroke="#1a1a1a" stroke-width="0.8" stroke-linejoin="round" stroke-linecap="round"/>
<path d="M239.2 214.5 C240.2 217.5 238.7 221 235 221.8 C231.5 222.3 229.4 219.5 230.4 216.5 C232 213.5 237.5 212.8 239.2 214.5 Z" fill="#e4d26e" stroke="#1a1a1a" stroke-width="0.8" stroke-linejoin="round" stroke-linecap="round"/>
<path d="M194.2 214.8 L194.6 217.6 M196.4 214.6 L196.8 217.2" stroke="#1a1a1a" stroke-width="0.6" fill="none"/>
<path d="M235.8 214.8 L235.4 217.6 M233.6 214.6 L233.2 217.2" stroke="#1a1a1a" stroke-width="0.6" fill="none"/>
</g></g>
<ellipse cx="203" cy="199" rx="4.9" ry="4.8" fill="#1a1a1a"/>
<ellipse cx="229" cy="199" rx="5" ry="4.9" fill="#1a1a1a"/>
<path d="M196.5 199.2 C196.9 197 198.2 195.6 199.8 195.2 C198.9 197.4 198.9 200.4 199.8 202.4 C198 201.8 196.8 200.6 196.5 199.2 Z" fill="#e6e6e6" stroke="#1a1a1a" stroke-width="0.5"/>
<path d="M221.7 199.7 C222.4 197 224 195.5 226.1 194.9 C224.9 197.3 224.7 200.9 225.9 203.2 C223.8 202.7 222.1 201.4 221.7 199.7 Z" fill="#e6e6e6" stroke="#1a1a1a" stroke-width="0.5"/>
<circle cx="205" cy="199.6" r="1.2" fill="#8c8c8c"/>
<circle cx="231" cy="198.4" r="1.2" fill="#8c8c8c"/>
<path d="M194.1 192.9 L199 195.2 L197.4 196.9 Z" fill="#1a1a1a"/>
<path d="M236.3 192.7 L232.2 194.4 L233.6 196.2 Z" fill="#1a1a1a"/>
<path d="M198.2 185.3 C199 183.6 200.6 183 202.6 183.6 L202.2 185.2 Z" fill="#1a1a1a"/>
<path d="M231.8 185.3 C231 183.6 229.4 183 227.4 183.6 L227.8 185.2 Z" fill="#1a1a1a"/>
<path d="M207.5 213.4 C211 215.8 218 215.8 222 213.6" stroke="#1a1a1a" stroke-width="0.9" fill="none" stroke-linecap="round"/>
<defs>
<g id="yap" font-family="'DejaVu Serif','Liberation Serif',serif" font-weight="normal" font-size="100" stroke-linejoin="miter" stroke-miterlimit="3" style="font-stretch:normal">
<g aria-label="IT&#39;S YAP TIME"><text transform="matrix(0.2213 -0.10326 0 0.6719 94.379 315.129)" stroke-width="2.71">I</text><text transform="matrix(0.3043 -0.11812 0 0.6718 108.203 308.577)" stroke-width="1.97">T</text><text transform="matrix(0.2834 -0.08909 0 0.2731 132.919 263.227)" stroke-width="0">&#39;</text><text transform="matrix(0.2842 -0.07389 0 0.6985 140.513 296.598)" stroke-width="2.82">S</text><text transform="matrix(0.2514 -0.03575 0 0.6837 171.582 289.922)" stroke-width="5.57">Y</text><text transform="matrix(0.2643 -0.01422 0 0.6829 192.355 288.208)" stroke-width="5.30">A</text><text transform="matrix(0.3198 0.01535 0 0.6855 215.372 287.158)" stroke-width="2.81">P</text><text transform="matrix(0.2842 0.04922 0 0.7146 249.222 289.304)" stroke-width="2.11">T</text><text transform="matrix(0.2143 0.05421 0 0.7115 274.418 293.265)" stroke-width="1.87">I</text><text transform="matrix(0.2816 0.09653 0 0.6997 286.698 295.666)" stroke-width="1.42">M</text><text transform="matrix(0.2782 0.12593 0 0.6532 318.118 304.939)" stroke-width="2.88">E</text></g>
<g aria-hidden="true"><text transform="matrix(-0.2514 0.03575 0 0.6837 188.118 287.571)" stroke-width="5.57">Y</text><text transform="matrix(-0.2643 0.01422 0 0.6829 211.545 287.175)" stroke-width="5.30">A</text><text transform="matrix(-0.2816 -0.09653 0 0.6997 315.502 305.540)" stroke-width="1.42">M</text></g>
</g>
</defs>
<g filter="url(#texv)">
<g fill="#c95a86" stroke="#c95a86"><use href="#yap" x="3.10" y="-1.71"/><use href="#yap" x="3.10" y="-0.85"/><use href="#yap" x="3.10" y="0.00"/><use href="#yap" x="3.10" y="0.85"/><use href="#yap" x="3.10" y="1.71"/><use href="#yap" x="2.40" y="2.40"/><use href="#yap" x="1.71" y="3.10"/><use href="#yap" x="0.85" y="3.10"/><use href="#yap" x="0.00" y="3.10"/><use href="#yap" x="-0.85" y="3.10"/><use href="#yap" x="-1.71" y="3.10"/><use href="#yap" x="-2.40" y="2.40"/><use href="#yap" x="-3.10" y="1.71"/><use href="#yap" x="-3.10" y="0.85"/><use href="#yap" x="-3.10" y="0.00"/><use href="#yap" x="-3.10" y="-0.85"/><use href="#yap" x="-3.10" y="-1.71"/><use href="#yap" x="-2.40" y="-2.40"/><use href="#yap" x="-1.71" y="-3.10"/><use href="#yap" x="-0.85" y="-3.10"/><use href="#yap" x="0.00" y="-3.10"/><use href="#yap" x="0.85" y="-3.10"/><use href="#yap" x="1.71" y="-3.10"/><use href="#yap" x="2.40" y="-2.40"/></g>
<g fill="#e4729d" stroke="#e4729d"><use href="#yap" x="2.65" y="-1.46"/><use href="#yap" x="2.65" y="-0.49"/><use href="#yap" x="2.65" y="0.49"/><use href="#yap" x="2.65" y="1.46"/><use href="#yap" x="2.05" y="2.05"/><use href="#yap" x="1.46" y="2.65"/><use href="#yap" x="0.49" y="2.65"/><use href="#yap" x="-0.49" y="2.65"/><use href="#yap" x="-1.46" y="2.65"/><use href="#yap" x="-2.05" y="2.05"/><use href="#yap" x="-2.65" y="1.46"/><use href="#yap" x="-2.65" y="0.49"/><use href="#yap" x="-2.65" y="-0.49"/><use href="#yap" x="-2.65" y="-1.46"/><use href="#yap" x="-2.05" y="-2.05"/><use href="#yap" x="-1.46" y="-2.65"/><use href="#yap" x="-0.49" y="-2.65"/><use href="#yap" x="0.49" y="-2.65"/><use href="#yap" x="1.46" y="-2.65"/><use href="#yap" x="2.05" y="-2.05"/></g>
<g fill="#e4729d" stroke="#e4729d"><use href="#yap" x="1.70" y="-0.94"/><use href="#yap" x="1.70" y="0.00"/><use href="#yap" x="1.70" y="0.94"/><use href="#yap" x="0.94" y="1.70"/><use href="#yap" x="0.00" y="1.70"/><use href="#yap" x="-0.94" y="1.70"/><use href="#yap" x="-1.70" y="0.94"/><use href="#yap" x="-1.70" y="0.00"/><use href="#yap" x="-1.70" y="-0.94"/><use href="#yap" x="-0.94" y="-1.70"/><use href="#yap" x="0.00" y="-1.70"/><use href="#yap" x="0.94" y="-1.70"/></g>
<g fill="#e4729d" stroke="#e4729d"><use href="#yap" x="0.80" y="-0.44"/><use href="#yap" x="0.80" y="0.44"/><use href="#yap" x="0.44" y="0.80"/><use href="#yap" x="-0.44" y="0.80"/><use href="#yap" x="-0.80" y="0.44"/><use href="#yap" x="-0.80" y="-0.44"/><use href="#yap" x="-0.44" y="-0.80"/><use href="#yap" x="0.44" y="-0.80"/></g>
<g fill="#c0708c" stroke="#c0708c"><use href="#yap" x="1.05" y="-0.58"/><use href="#yap" x="1.05" y="0.00"/><use href="#yap" x="1.05" y="0.58"/><use href="#yap" x="0.58" y="1.05"/><use href="#yap" x="0.00" y="1.05"/><use href="#yap" x="-0.58" y="1.05"/><use href="#yap" x="-1.05" y="0.58"/><use href="#yap" x="-1.05" y="0.00"/><use href="#yap" x="-1.05" y="-0.58"/><use href="#yap" x="-0.58" y="-1.05"/><use href="#yap" x="0.00" y="-1.05"/><use href="#yap" x="0.58" y="-1.05"/></g>
<g fill="#e2b6b3" stroke="#e2b6b3"><use href="#yap" x="0.60" y="-0.33"/><use href="#yap" x="0.60" y="0.33"/><use href="#yap" x="0.33" y="0.60"/><use href="#yap" x="-0.33" y="0.60"/><use href="#yap" x="-0.60" y="0.33"/><use href="#yap" x="-0.60" y="-0.33"/><use href="#yap" x="-0.33" y="-0.60"/><use href="#yap" x="0.33" y="-0.60"/></g>
<use href="#yap" fill="#e2b6b3" stroke="#e2b6b3"/>
</g>
</svg>
</body></html>
